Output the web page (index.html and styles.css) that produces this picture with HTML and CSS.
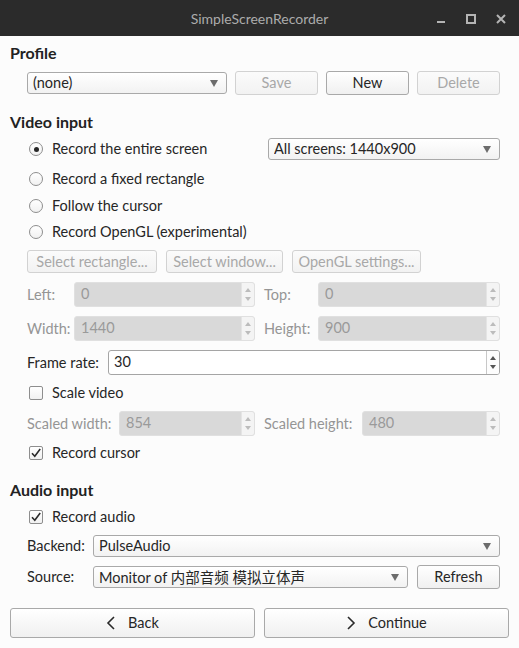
FILE: index.html
```html
<!DOCTYPE html>
<html>
<head>
<meta charset="utf-8">
<link rel="stylesheet" href="styles.css">
</head>
<body>
<div class="titlebar">
  <div></div>
  <div class="title">SimpleScreenRecorder</div>
  <div class="wctrl">
    <svg width="10" height="10" viewBox="0 0 10 10"><rect x="1" y="7" width="8" height="2" fill="#b4b4b4"/></svg>
    <svg width="10" height="10" viewBox="0 0 10 10"><rect x="1" y="1" width="8" height="8" fill="none" stroke="#b4b4b4" stroke-width="2"/></svg>
    <svg width="10" height="10" viewBox="0 0 10 10"><path d="M1 1L9 9M9 1L1 9" stroke="#b4b4b4" stroke-width="2"/></svg>
  </div>
</div>
<main class="content">
  <h2 class="heading h-profile">Profile</h2>
  <div class="indent row profile-row">
    <div class="combo grow"><span>(none)</span><i class="caret"></i></div>
    <button class="btn w83" disabled>Save</button>
    <button class="btn w83">New</button>
    <button class="btn w83" disabled>Delete</button>
  </div>

  <h2 class="heading h-video">Video input</h2>
  <div class="indent">
    <div class="row opt r1">
      <span class="radio on"></span><span class="opt-text">Record the entire screen</span>
      <div class="combo screens"><span>All screens: 1440x900</span><i class="caret"></i></div>
    </div>
    <div class="row opt r2"><span class="radio"></span><span class="opt-text">Record a fixed rectangle</span></div>
    <div class="row opt r3"><span class="radio"></span><span class="opt-text">Follow the cursor</span></div>
    <div class="row opt r4"><span class="radio"></span><span class="opt-text">Record OpenGL (experimental)</span></div>

    <div class="row btnrow">
      <button class="btn small b-rect" disabled>Select rectangle...</button>
      <button class="btn small b-win" disabled>Select window...</button>
      <button class="btn small b-gl" disabled>OpenGL settings...</button>
    </div>

    <div class="row spinrow">
      <span class="lbl dis l47">Left:</span>
      <div class="spin dis s181"><span class="val">0</span><span class="arrows"><i class="up"></i><i class="dn"></i></span></div>
      <span class="lbl dis l54 gapl">Top:</span>
      <div class="spin dis grow"><span class="val">0</span><span class="arrows"><i class="up"></i><i class="dn"></i></span></div>
    </div>
    <div class="row spinrow">
      <span class="lbl dis l47">Width:</span>
      <div class="spin dis s181"><span class="val">1440</span><span class="arrows"><i class="up"></i><i class="dn"></i></span></div>
      <span class="lbl dis l54 gapl">Height:</span>
      <div class="spin dis grow"><span class="val">900</span><span class="arrows"><i class="up"></i><i class="dn"></i></span></div>
    </div>
    <div class="row spinrow">
      <span class="lbl l81">Frame rate:</span>
      <div class="spin grow"><span class="val">30</span><span class="arrows"><i class="up"></i><i class="dn"></i></span></div>
    </div>

    <div class="row opt r-scale"><span class="check"></span><span class="opt-text">Scale video</span></div>
    <div class="row spinrow r-scaled">
      <span class="lbl dis l92">Scaled width:</span>
      <div class="spin dis s136"><span class="val">854</span><span class="arrows"><i class="up"></i><i class="dn"></i></span></div>
      <span class="lbl dis l98 gapl">Scaled height:</span>
      <div class="spin dis grow"><span class="val">480</span><span class="arrows"><i class="up"></i><i class="dn"></i></span></div>
    </div>
    <div class="row opt r-cursor"><span class="check on"><svg width="14" height="14" viewBox="0 0 14 14"><path d="M3 7.2L5.8 10.2L11.2 3" fill="none" stroke="#2a2a2a" stroke-width="1.6"/></svg></span><span class="opt-text">Record cursor</span></div>
  </div>

  <h2 class="heading h-audio">Audio input</h2>
  <div class="indent">
    <div class="row opt r-audio"><span class="check on"><svg width="14" height="14" viewBox="0 0 14 14"><path d="M3 7.2L5.8 10.2L11.2 3" fill="none" stroke="#2a2a2a" stroke-width="1.6"/></svg></span><span class="opt-text">Record audio</span></div>
    <div class="row r-backend">
      <span class="lbl l66">Backend:</span>
      <div class="combo grow"><span>PulseAudio</span><i class="caret"></i></div>
    </div>
    <div class="row r-source">
      <span class="lbl l66">Source:</span>
      <div class="combo grow"><span>Monitor of 内部音频 模拟立体声</span><i class="caret"></i></div>
      <button class="btn w83 refresh">Refresh</button>
    </div>
  </div>

  <div class="row navrow">
    <button class="btn nav"><svg width="10" height="14" viewBox="0 0 10 14"><path d="M8 1L2 7L8 13" fill="none" stroke="#2a2a2a" stroke-width="1.6"/></svg><span>Back</span></button>
    <button class="btn nav"><svg width="10" height="14" viewBox="0 0 10 14"><path d="M2 1L8 7L2 13" fill="none" stroke="#2a2a2a" stroke-width="1.6"/></svg><span>Continue</span></button>
  </div>
</main>
</body>
</html>
```

FILE: styles.css
```css
* { box-sizing: border-box; }

body {
  margin: 0;
  width: 519px;
  height: 648px;
  overflow: hidden;
  background: #fcfcfc;
  font-family: Lato, "Noto Sans CJK SC", sans-serif;
  font-size: 14.5px;
  color: #262626;
}

.titlebar {
  height: 36px;
  background: #2b2b2b;
  display: grid;
  grid-template-columns: 1fr auto 1fr;
  align-items: center;
}
.title {
  color: #ababab;
  font-size: 14px;
}
.wctrl {
  justify-self: end;
  display: flex;
  gap: 20px;
  padding-right: 13px;
  padding-top: 1px;
}
.wctrl svg { display: block; }

.content {
  padding: 7px 10px 0 10px;
}

.heading {
  margin: 0;
  font-size: 16px;
  font-weight: 700;
  line-height: 20px;
  height: 20px;
  color: #222;
}
.h-video { margin-top: 17px; }
.h-audio { margin-top: 15px; }

.indent { margin: 0 9px 0 17px; }

.row {
  display: flex;
  align-items: center;
}
.grow { flex: 1; min-width: 0; }

.profile-row { margin-top: 8px; height: 24px; gap: 8px; }

.opt { height: 24px; }
.r1 { margin-top: 5px; }
.r2 { margin-top: 6px; }
.r3 { margin-top: 3px; }
.r4 { margin-top: 2px; }
.r-scale { margin-top: 6px; }
.r-cursor { margin-top: 5px; }
.r-audio { margin-top: 5px; }

.opt-text { margin-left: 9px; padding-bottom: 2px; }
.lbl { padding-bottom: 1px; }

.radio {
  width: 14px;
  height: 14px;
  margin-left: 2px;
  border-radius: 50%;
  border: 1px solid #8e8e8e;
  background: linear-gradient(#ffffff, #f1f1f1);
  display: flex;
  align-items: center;
  justify-content: center;
  flex: none;
}
.radio.on::after {
  content: "";
  width: 5px;
  height: 5px;
  border-radius: 50%;
  background: #262626;
}

.check {
  width: 14px;
  height: 14px;
  margin-left: 2px;
  border-radius: 2px;
  border: 1px solid #8e8e8e;
  background: linear-gradient(#ffffff, #f1f1f1);
  flex: none;
  position: relative;
}
.check svg {
  position: absolute;
  left: -1px;
  top: -1px;
}

.combo {
  height: 22px;
  border: 1px solid #a9a9a9;
  border-radius: 3px;
  background: linear-gradient(#ffffff, #f2f2f2);
  display: flex;
  align-items: center;
  padding: 0 8px 1px 5px;
  white-space: nowrap;
}
.combo span { flex: 1; overflow: hidden; }
.caret {
  width: 0;
  height: 0;
  border-left: 4px solid transparent;
  border-right: 4px solid transparent;
  border-top: 7px solid #6c6c6c;
  flex: none;
  margin-top: 1px;
}
.screens { width: 232px; margin-left: auto; }

.btn {
  font: inherit;
  color: #262626;
  height: 24px;
  border: 1px solid #a9a9a9;
  border-radius: 3px;
  background: linear-gradient(#ffffff, #f0f0f0);
  padding: 0 8px 1px;
  display: flex;
  align-items: center;
  justify-content: center;
  white-space: nowrap;
}
.btn:disabled {
  color: #a8a8a8;
  border-color: #d2d2d2;
  background: linear-gradient(#fbfbfb, #f2f2f2);
}
.w83 { width: 83px; flex: none; }

.btnrow { margin-top: 6px; gap: 9px; }
.btn.small { height: 23px; padding: 0 0 1px; flex: none; }
.b-rect { width: 130px; }
.b-win { width: 117px; }
.b-gl { width: 129px; }

.spinrow { margin-top: 9px; height: 25px; }
.r-scaled { margin-top: 6px; }

.lbl { white-space: nowrap; flex: none; }
.lbl.dis { color: #959595; }
.l47 { width: 47px; }
.l54 { width: 54px; }
.l81 { width: 81px; }
.l92 { width: 92px; }
.l98 { width: 98px; }
.l66 { width: 66px; }
.gapl { margin-left: 9px; }

.spin {
  height: 25px;
  display: flex;
  border: 1px solid #a5a5a5;
  border-radius: 3px;
  background: #ffffff;
  overflow: hidden;
}
.s181 { width: 181px; flex: none; }
.s136 { width: 136px; flex: none; }
.spin .val {
  flex: 1;
  padding-left: 5px;
  line-height: 22px;
}
.spin .arrows {
  width: 13px;
  border-left: 1px solid #c8c8c8;
  display: flex;
  flex-direction: column;
  align-items: center;
  justify-content: space-between;
  padding: 5px 0 5px;
  background: #fdfdfd;
}
.spin .up, .spin .dn {
  width: 0;
  height: 0;
  border-left: 3px solid transparent;
  border-right: 3px solid transparent;
}
.spin .up { border-bottom: 4px solid #555; }
.spin .dn { border-top: 4px solid #555; }

.spin.dis {
  border-color: #e0e0e0;
  background: #d9d9d9;
}
.spin.dis .val { color: #9a9a9a; padding-left: 6px; }
.spin.dis .arrows {
  background: #f4f4f4;
  border-left-color: #e4e4e4;
}
.spin.dis .up { border-bottom-color: #bcbcbc; }
.spin.dis .dn { border-top-color: #bcbcbc; }

.r-backend { margin-top: 6px; height: 22px; }
.r-source { margin-top: 8px; height: 24px; gap: 9px; }
.r-source .lbl { margin-right: -9px; }

.navrow { margin-top: 19px; gap: 9px; }
.btn.nav {
  flex: 1;
  height: 30px;
  gap: 12px;
}
.btn.nav svg { display: block; }
```
